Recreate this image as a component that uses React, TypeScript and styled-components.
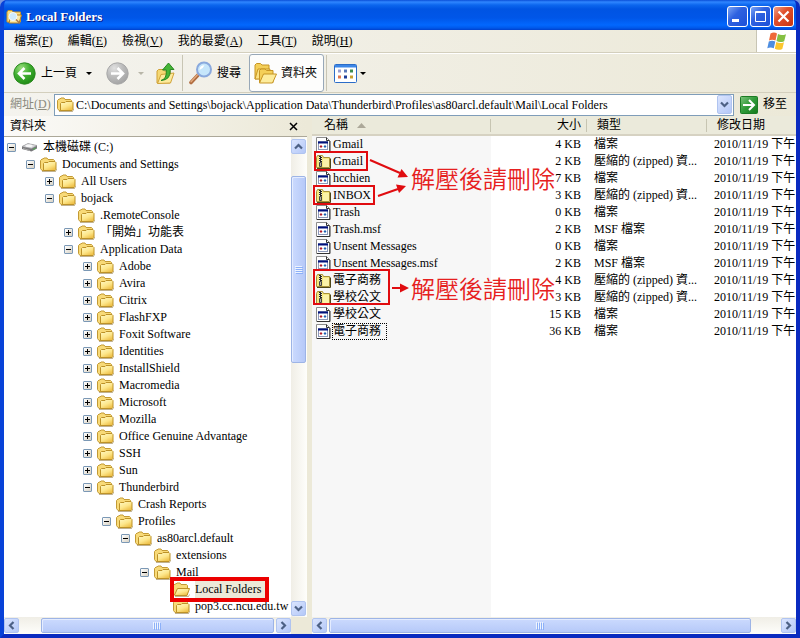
import React from 'react';
import styled, { createGlobalStyle, css } from 'styled-components';

const Global = createGlobalStyle`
  *, *::before, *::after { box-sizing: border-box; }
  body { margin: 0; background: #7a96df; }
  body, button, input, table {
    font-family: 'Liberation Serif', 'Noto Sans CJK TC', serif;
    font-size: 12px;
    line-height: 17px;
    color: #000;
  }
  button { padding: 0; border: 0; background: none; }
  ul { list-style: none; margin: 0; padding: 0; }
  svg { display: block; flex: none; }
`;

const Window = styled.div`
  display: flex;
  flex-direction: column;
  min-height: 100vh;
  overflow: hidden;
  border: 4px solid #0842d8;
  border-top: 0;
  border-color: #0842d8 #0a2bc0 #0a2bc0 #0842d8;
  border-radius: 7px 7px 0 0;
  background: #0a50e0;
`;

const TitleBar = styled.header`
  display: flex;
  align-items: center;
  height: 30px;
  margin: 0 -4px;
  padding: 3px 6px 0 6px;
  gap: 4px;
  background: linear-gradient(#0a4fd8 0, #2f86ff 2px, #0c66ee 5px, #0054e3 9px, #0056e8 18px, #0268fe 25px, #0058ea 28px, #0040cc 30px);
`;

const Title = styled.h1`
  flex: 1;
  margin: 0;
  font-size: 13px;
  line-height: 17px;
  color: #fff;
  text-shadow: 1px 1px 0 #0a1883;
`;

const CaptionButtons = styled.div`
  display: flex;
  gap: 2px;
`;

const CaptionButton = styled.button<{ $close?: boolean }>`
  display: grid;
  place-items: center;
  width: 21px;
  height: 21px;
  border: 1px solid #fff;
  border-radius: 3px;
  background: ${p => p.$close
    ? 'linear-gradient(135deg, #f0a088, #e0502c 40%, #c83410)'
    : 'linear-gradient(135deg, #7ba4f5, #2f62e0 40%, #1c50d8)'};
`;

const MenuRow = styled.nav`
  display: flex;
  height: 23px;
  background: linear-gradient(90deg, #f4f3ee, #ece9d8);
  border-bottom: 1px solid #d3cfbd;
`;

const MenuList = styled.div`
  display: flex;
  flex: 1;
  align-items: center;
  gap: 15px;
  padding-left: 10px;
`;

const MenuButton = styled.button`
  white-space: nowrap;
`;

const LogoBox = styled.div`
  display: grid;
  place-items: center;
  width: 40px;
  border-left: 1px solid #c8c5b4;
  background: #fff;
`;

const Toolbar = styled.div`
  display: flex;
  align-items: center;
  height: 40px;
  padding-left: 9px;
  border-top: 1px solid #fff;
  border-bottom: 1px solid #d3cfbd;
  background: linear-gradient(90deg, #f4f3ee, #ece9d8);
`;

const ToolButton = styled.button<{ $gap?: number; $left?: number; $right?: number; $pressed?: boolean }>`
  display: flex;
  align-items: center;
  gap: ${p => p.$gap ?? 5}px;
  height: 38px;
  margin: 0 ${p => p.$right ?? 0}px 0 ${p => p.$left ?? 0}px;
  white-space: nowrap;
  ${p => p.$pressed && css`
    padding: 0 6px 0 4px;
    border: 1px solid #98a8b8;
    border-radius: 3px;
    background: #fdfdfc;
  `}
`;

const Separator = styled.span`
  width: 1px;
  height: 36px;
  background: #c8c5b4;
`;

const AddressBar = styled.form`
  display: flex;
  align-items: center;
  height: 23px;
  padding: 0 9px 0 6px;
  background: linear-gradient(90deg, #f4f3ee, #ece9d8);
`;

const AddressLabel = styled.label`
  width: 44px;
  color: #8b8a7e;
  white-space: nowrap;
`;

const AddressField = styled.div`
  display: flex;
  flex: 1;
  align-items: center;
  height: 22px;
  padding: 0 1px 0 2px;
  gap: 1px;
  border: 1px solid #7f9db9;
  background: #fff;
`;

const AddressInput = styled.input`
  flex: 1;
  min-width: 0;
  padding: 2px 0 0 1px;
  border: 0;
  outline: 0;
  background: transparent;
`;

const GoButton = styled.button`
  display: flex;
  align-items: center;
  gap: 5px;
  margin-left: 6px;
  white-space: nowrap;
`;

const Panes = styled.main`
  display: flex;
  flex: 1;
  background: #ece9d8;
`;

const FolderPane = styled.aside`
  display: flex;
  flex-direction: column;
  flex: none;
  width: 303px;
  background: #fff;
`;

const PaneHeader = styled.div`
  display: flex;
  align-items: center;
  justify-content: space-between;
  height: 21px;
  padding: 0 9px 0 6px;
  border-bottom: 1px solid #aca899;
  background: linear-gradient(90deg, #fbfaf8, #ece9d8);
`;

const PaneBody = styled.div`
  display: flex;
  flex: 1;
`;

const TreeArea = styled.div`
  flex: 1;
  min-width: 0;
  padding-top: 2px;
  overflow: hidden;
`;

const Branch = styled.ul`
  & & { padding-left: 19px; }
`;

const TreeRow = styled.div`
  position: relative;
  display: flex;
  align-items: center;
  height: 17px;
  padding-left: 3px;
  gap: 5px;
`;

const Expander = styled.button`
  display: grid;
  place-items: center;
  flex: none;
  width: 9px;
  height: 9px;
  border: 1px solid #7b98b5;
  border-radius: 1px;
  background: linear-gradient(135deg, #fff, #d8d2c4);
`;

const ExpanderSpace = styled.span`
  flex: none;
  width: 9px;
`;

const TreeLabel = styled.span<{ $selected?: boolean }>`
  flex: none;
  height: 17px;
  padding-right: 4px;
  white-space: nowrap;
  background: ${p => (p.$selected ? '#ece9d8' : 'transparent')};
`;

const RowMark = styled.span`
  position: absolute;
  z-index: 1;
  left: 14px;
  top: -4px;
  width: 99px;
  height: 25px;
  border: 4px solid #ec0000;
`;

const Scroll = styled.div<{ $vertical?: boolean }>`
  display: flex;
  flex-direction: ${p => (p.$vertical ? 'column' : 'row')};
  flex: none;
  gap: 1px;
  padding: ${p => (p.$vertical ? '2px 0 1px' : '1px 0')};
  ${p => (p.$vertical ? 'width: 16px;' : 'height: 17px;')}
  background: linear-gradient(${p => (p.$vertical ? '90deg' : '180deg')}, #f0eee6, #fefefb);
`;

const ScrollButton = styled.button<{ $tall?: boolean }>`
  display: grid;
  place-items: center;
  flex: none;
  width: 15px;
  height: ${p => (p.$tall ? 19 : 15)}px;
  border: 1px solid #b0c4f0;
  border-radius: 2px;
  background: linear-gradient(135deg, #dbe5fe, #b4c8f8);
`;

const ScrollThumb = styled.div<{ $vertical?: boolean; $before: number; $size: number; $after: number }>`
  display: flex;
  flex: 1;
  flex-direction: ${p => (p.$vertical ? 'column' : 'row')};
  &::before { content: ''; flex: ${p => p.$before}; }
  &::after { content: ''; flex: ${p => p.$after}; }
  & > div {
    display: grid;
    place-items: center;
    flex: ${p => p.$size};
    ${p => (p.$vertical ? 'width: 15px;' : 'height: 15px;')}
    border: 1px solid #9db4e6;
    border-radius: 2px;
    background: linear-gradient(${p => (p.$vertical ? '90deg' : '180deg')}, #cbdafe, #b6c9f8);
    box-shadow: inset 1px 1px 0 #e4ecff;
  }
`;

const BottomRow = styled.div`
  display: flex;
  background: #ece9d8;
`;

const ScrollStretch = styled.div`
  flex: 1;
  min-width: 0;
`;

const Corner = styled.div`
  width: 16px;
`;

const FilePane = styled.section`
  position: relative;
  display: flex;
  flex: 1;
  flex-direction: column;
  min-width: 0;
  margin-left: 5px;
  overflow: hidden;
  background: linear-gradient(#f7f7f7, #f7f7f7) 0 0 / 179px 100% no-repeat #fff;
`;

const FileArea = styled.div`
  flex: 1;
`;

const FileTable = styled.table`
  width: 100%;
  table-layout: fixed;
  border-collapse: separate;
  border-spacing: 0;
`;

const HeadCell = styled.th<{ $width?: number; $right?: boolean; $last?: boolean }>`
  width: ${p => (p.$width ? `${p.$width}px` : 'auto')};
  height: 20px;
  padding: ${p => (p.$right ? '0 6px 0 0' : '0 0 0 10px')};
  font-weight: normal;
  text-align: ${p => (p.$right ? 'right' : 'left')};
  white-space: nowrap;
  border-bottom: 2px solid #d6d2c2;
  background:
    linear-gradient(${p => (p.$last ? '#ebeadb, #ebeadb' : '#c7c5b2, #c7c5b2')}) 100% 3px / 1px 13px no-repeat,
    #ebeadb;
`;

const HeadInner = styled.span`
  display: inline-flex;
  align-items: center;
  gap: 9px;
  height: 17px;
  padding-left: 2px;
  vertical-align: top;
`;

const Cell = styled.td<{ $right?: boolean }>`
  height: 17px;
  padding: ${p => (p.$right ? '0 6px 0 0' : '0 0 0 7px')};
  overflow: hidden;
  text-align: ${p => (p.$right ? 'right' : 'left')};
  white-space: nowrap;
`;

const NameCell = styled(Cell)`
  padding-left: 4px;
`;

const FileName = styled.a<{ $focus?: boolean }>`
  display: inline-flex;
  align-items: center;
  height: 17px;
  vertical-align: top;
  gap: 1px;
  color: #000;
  text-decoration: none;
  & > span {
    padding: 0 5px 0 1px;
    height: 17px;
    line-height: ${p => (p.$focus ? 15 : 17)}px;
    border: ${p => (p.$focus ? '1px dotted #000' : '0')};
    padding-left: ${p => (p.$focus ? 0 : 1)}px;
  }
`;

const Marks = styled.svg`
  position: absolute;
  left: 0;
  top: 0;
  pointer-events: none;
`;

const Note = styled.p<{ $top: number }>`
  position: absolute;
  left: 99px;
  top: ${p => p.$top}px;
  margin: 0;
  font-size: 24px;
  line-height: 32px;
  font-family: 'Noto Sans CJK TC', sans-serif;
  font-weight: 350;
  color: #e62020;
  white-space: nowrap;
`;

const FolderIcon = ({ open }: { open?: boolean }) => (
  <svg width="17" height="15" viewBox="0 0 17 15" aria-hidden="true">
    <defs>
      <linearGradient id="folderFace" x1="0" y1="0" x2="0.6" y2="1">
        <stop offset="0" stopColor="#fffac8" />
        <stop offset="0.6" stopColor="#fde68a" />
        <stop offset="1" stopColor="#efc24c" />
      </linearGradient>
    </defs>
    <path d="M.5 11.500V3.500L2 2h1l1-1h3l1 1.500h5.500l1 1v9l-1 1H2z" fill="#f8da78" stroke="#c39a34" />
    {open
      ? <path d="M1.500 13 4.500 6.500h12L14 13.500H2z" fill="url(#folderFace)" stroke="#bd9228" />
      : <path d="M3.500 13.500V6.500l1-1h3.500l1-1h6l1 1v7l-1 1z" fill="url(#folderFace)" stroke="#bd9228" />}
    <path d="M2 14.500h13.500l1-2" fill="none" stroke="#75540c" strokeOpacity=".45" />
  </svg>
);

const ZipIcon = () => (
  <svg width="15" height="15" viewBox="0 0 15 15" aria-hidden="true">
    <path d="M.5 13V3.500l1-2h5l1 2h6v10H.5z" fill="#f5e87e" stroke="#a89238" />
    <path d="M7 5h6v8H7z" fill="#fbf3a8" />
    <path d="M1 14.500h13.500V4.500" fill="none" stroke="#4c4618" />
    <path d="M3 2h3v10H3z" fill="#f0ecd0" />
    <path d="M3 2.500h2M4 3.500h2M3 4.500h2M4 5.500h2M3 6.500h2M4 7.500h2" stroke="#222" />
    <path d="M3.500 8.500h2v4h-2z" fill="#b8b49c" stroke="#444" />
  </svg>
);

const FileIcon = () => (
  <svg width="15" height="15" viewBox="0 0 15 15" aria-hidden="true">
    <path d="M.5.500h10L13.500 3.500v11H.5z" fill="#fff" stroke="#8c8c8c" />
    <path d="M10.500.500v3h3M14 4v10.500H1" fill="none" stroke="#333" />
    <rect x="2.500" y="4.500" width="9" height="8" fill="#fff" stroke="#8c98b8" />
    <path d="M2 5.500h10" stroke="#00107c" strokeWidth="2" />
    <path d="m3.500 9.500 1.500-1.500 1.500 1.500L5 11z" fill="#b01828" />
    <path d="m7.500 9.500 1.500-1.500 1.500 1.500L9 11z" fill="#1c60b0" />
  </svg>
);

const DriveIcon = () => (
  <svg width="17" height="15" viewBox="0 0 17 15" aria-hidden="true">
    <path d="M1 6.500 7 3.500l9 2v3l-5.500 3L1 9z" fill="#77777a" />
    <path d="M1 6.500 7 3.500l9 2-5.500 3z" fill="#d9d9dc" stroke="#98989c" strokeWidth=".6" />
    <ellipse cx="8" cy="5.800" rx="3.500" ry="1.300" fill="#f8f8f8" />
    <path d="M12 9.500 15 8" stroke="#50b050" />
    <path d="M2 8.500 9 10.500" stroke="#aaa" />
  </svg>
);

const FolderSearchIcon = () => (
  <svg width="16" height="16" viewBox="0 0 16 16" aria-hidden="true">
    <path d="M1 13V3l1-1.500h4L7 3h7.500v10z" fill="#f7dc82" stroke="#c9952b" />
    <path d="M3 14 5 6h10.500L13 14z" fill="#fbe9a4" stroke="#b9811e" />
    <circle cx="7" cy="7.500" r="4" fill="#cdeafd" stroke="#f4f8fb" />
    <path d="m10 10.500 4 4" stroke="#a5774e" strokeWidth="1.500" />
  </svg>
);

const WindowsLogo = () => (
  <svg width="20" height="19" viewBox="0 0 20 19" aria-hidden="true">
    <path d="M3.500 1.500Q7-.5 10 1.500L8.500 8.500Q5 7 2 8.500z" fill="#ee6a3a" />
    <path d="M11 2Q14.500 4 19 2.200L17.200 9.200Q13 11 9.500 9z" fill="#84c043" />
    <path d="M1.800 9.500Q5 8 8.300 9.500L6.800 16.300Q3.500 14.800.3 16.300z" fill="#4d8de0" />
    <path d="M9.300 10Q13 12 17 10.200L15.300 17Q11.500 18.800 7.800 16.800z" fill="#fbc62e" />
  </svg>
);

const RoundArrow = ({ disabled }: { disabled?: boolean }) => (
  <svg width="23" height="23" viewBox="0 0 23 23" aria-hidden="true">
    <defs>
      <radialGradient id={disabled ? 'ballGrey' : 'ballGreen'} cx=".35" cy=".25" r=".8">
        <stop offset="0" stopColor={disabled ? '#e0e0e0' : '#9ade7c'} />
        <stop offset=".5" stopColor={disabled ? '#bcbcbc' : '#3fae30'} />
        <stop offset="1" stopColor={disabled ? '#a2a2a2' : '#1e8a14'} />
      </radialGradient>
    </defs>
    <circle cx="11.500" cy="11.500" r="10.700" fill={`url(#${disabled ? 'ballGrey' : 'ballGreen'})`} stroke={disabled ? '#a8a8a8' : '#2c8a20'} />
    <path
      d={disabled ? 'M5 11.500h12M11.500 6l5.500 5.500-5.500 5.500' : 'M18 11.500H6M11.500 6 6 11.500l5.500 5.500'}
      fill="none" stroke="#fff" strokeWidth="2.600"
    />
  </svg>
);

const Caret = ({ color = '#000' }: { color?: string }) => (
  <svg width="6" height="3" viewBox="0 0 6 3" aria-hidden="true"><path d="M0 0h6L3 3z" fill={color} /></svg>
);

const UpIcon = () => (
  <svg width="19" height="23" viewBox="0 0 19 23" aria-hidden="true">
    <path d="M1 21V9l1.500-1.500H7L8.500 9H14v12z" fill="#f5d873" stroke="#cf9f34" />
    <path d="M1.500 21.500 5 12.500l13-1.500-3.500 10z" fill="#fdeb9c" stroke="#d0a23a" />
    <path d="M5 18.500Q11 17 10.300 8H6.500L12.500 1l5.500 6.500h-3.700Q15 18 5 18.500z" fill="#45b537" stroke="#20801a" strokeWidth=".9" />
  </svg>
);

const SearchIcon = () => (
  <svg width="24" height="24" viewBox="0 0 24 24" aria-hidden="true">
    <path d="m2 21.500 7.500-8" stroke="#b06c40" strokeWidth="3.600" strokeLinecap="round" />
    <path d="m2 20.800 6.500-7" stroke="#e3ab7e" strokeWidth="1.300" strokeLinecap="round" />
    <circle cx="15" cy="8.500" r="7" fill="#c6e6fb" stroke="#8aa9dd" strokeWidth="2" />
    <path d="M10.500 9Q10.500 4.500 15.500 4.300 14 8 10.500 9z" fill="#fff" />
  </svg>
);

const FoldersIcon = () => (
  <svg width="23" height="23" viewBox="0 0 23 23" aria-hidden="true">
    <path d="M1 17V3l1.500-1.500h4L8 3h7v13z" fill="#f4cf58" stroke="#c79524" />
    <path d="M1 17 4 7h12l-2 10z" fill="#fbe284" stroke="#c79524" />
    <path d="M5.500 20.500V8.500L7 7h4l1.500 1.500H19v12z" fill="#f4cf58" stroke="#c79524" />
    <path d="M5.500 21 9.500 12h13l-4 9z" fill="#fdec9c" stroke="#c79524" />
  </svg>
);

const ViewsIcon = () => (
  <svg width="23" height="19" viewBox="0 0 23 19" aria-hidden="true">
    <rect x=".5" y=".5" width="22" height="18" rx="1" fill="#fff" stroke="#2a6cc8" />
    <path d="M1 1h21v2.500H1z" fill="#3c86e6" />
    <path d="M4 5.500h3v3H4z" fill="#9a9fd0" /><path d="M10 5.500h3v3h-3z" fill="#5a78b8" /><path d="M16 5.500h3v3h-3z" fill="#3c8c50" />
    <path d="M4 11.500h3v3H4z" fill="#e07850" /><path d="M10 11.500h3v3h-3z" fill="#1c3c98" /><path d="M16 11.500h3v3h-3z" fill="#c8a030" />
  </svg>
);

const GoIcon = () => (
  <svg width="18" height="18" viewBox="0 0 18 18" aria-hidden="true">
    <defs>
      <linearGradient id="goFace" x1="0" y1="0" x2="1" y2="1">
        <stop offset="0" stopColor="#7cc47c" /><stop offset=".5" stopColor="#2f9a38" /><stop offset="1" stopColor="#157a1c" />
      </linearGradient>
    </defs>
    <rect x=".5" y=".5" width="17" height="17" rx="1" fill="url(#goFace)" stroke="#1c7c24" />
    <path d="M3 9h11M9 4l5 5-5 5" fill="none" stroke="#fff" strokeWidth="2" />
  </svg>
);

const chevrons = {
  up: 'M1 6.500 4.500 3 8 6.500',
  down: 'M1 2.500 4.500 6 8 2.500',
  left: 'M6.500 1 3 4.500 6.500 8',
  right: 'M2.500 1 6 4.500 2.500 8',
};
type Direction = keyof typeof chevrons;

const Chevron = ({ to }: { to: Direction }) => (
  <svg width="9" height="9" viewBox="0 0 9 9" aria-hidden="true">
    <path d={chevrons[to]} fill="none" stroke="#4d6185" strokeWidth="2.200" />
  </svg>
);

const Grip = ({ vertical }: { vertical?: boolean }) => (
  <svg width="8" height="8" viewBox="0 0 8 8" aria-hidden="true">
    <path d={vertical ? 'M0 .5h7M0 2.500h7M0 4.500h7M0 6.500h7' : 'M.5 0v7M2.500 0v7M4.500 0v7M6.500 0v7'} stroke="#eef4fe" />
    <path d={vertical ? 'M1 1.500h7M1 3.500h7M1 5.500h7M1 7.500h7' : 'M1.500 1v7M3.500 1v7M5.500 1v7M7.500 1v7'} stroke="#8cb0f8" />
  </svg>
);

interface ScrollBarProps { vertical?: boolean; before: number; size: number; after: number }

const ScrollBar = ({ vertical, before, size, after }: ScrollBarProps) => (
  <Scroll $vertical={vertical}>
    <ScrollButton type="button" aria-label={vertical ? 'Scroll up' : 'Scroll left'}><Chevron to={vertical ? 'up' : 'left'} /></ScrollButton>
    <ScrollThumb $vertical={vertical} $before={before} $size={size} $after={after}>
      <div><Grip vertical={vertical} /></div>
    </ScrollThumb>
    <ScrollButton type="button" aria-label={vertical ? 'Scroll down' : 'Scroll right'}><Chevron to={vertical ? 'down' : 'right'} /></ScrollButton>
  </Scroll>
);

interface Node { name: string; state?: 'open' | 'closed'; drive?: boolean; selected?: boolean; children?: Node[] }

const closed = (name: string): Node => ({ name, state: 'closed' });

const tree: Node[] = [{
  name: '本機磁碟 (C:)', state: 'open', drive: true, children: [{
    name: 'Documents and Settings', state: 'open', children: [
      closed('All Users'),
      {
        name: 'bojack', state: 'open', children: [
          { name: '.RemoteConsole' },
          closed('「開始」功能表'),
          {
            name: 'Application Data', state: 'open', children: [
              ...['Adobe', 'Avira', 'Citrix', 'FlashFXP', 'Foxit Software', 'Identities', 'InstallShield',
                'Macromedia', 'Microsoft', 'Mozilla', 'Office Genuine Advantage', 'SSH', 'Sun'].map(closed),
              {
                name: 'Thunderbird', state: 'open', children: [
                  { name: 'Crash Reports' },
                  {
                    name: 'Profiles', state: 'open', children: [{
                      name: 'as80arcl.default', state: 'open', children: [
                        { name: 'extensions' },
                        {
                          name: 'Mail', state: 'open', children: [
                            { name: 'Local Folders', selected: true },
                            { name: 'pop3.cc.ncu.edu.tw' },
                          ],
                        },
                      ],
                    }],
                  },
                ],
              },
            ],
          },
        ],
      },
    ],
  }],
}];

const TreeNodes = ({ nodes }: { nodes: Node[] }) => (
  <Branch>
    {nodes.map(node => (
      <li key={node.name}>
        <TreeRow>
          {node.state ? (
            <Expander type="button" aria-label={node.name} aria-expanded={node.state === 'open'}>
              <svg width="5" height="5" viewBox="0 0 5 5" aria-hidden="true">
                <path d={node.state === 'open' ? 'M0 2.500h5' : 'M0 2.500h5M2.500 0v5'} stroke="#000" />
              </svg>
            </Expander>
          ) : <ExpanderSpace />}
          {node.drive ? <DriveIcon /> : <FolderIcon open={node.selected} />}
          <TreeLabel $selected={node.selected}>{node.name}</TreeLabel>
          {node.selected && <RowMark />}
        </TreeRow>
        {node.children && <TreeNodes nodes={node.children} />}
      </li>
    ))}
  </Branch>
);

type Kind = 'file' | 'zip' | 'msf';
const kindText: Record<Kind, string> = { file: '檔案', zip: '壓縮的 (zipped) 資...', msf: 'MSF 檔案' };

const files: [string, number, Kind][] = [
  ['Gmail', 4, 'file'],
  ['Gmail', 2, 'zip'],
  ['hcchien', 7, 'file'],
  ['INBOX', 3, 'zip'],
  ['Trash', 0, 'file'],
  ['Trash.msf', 2, 'msf'],
  ['Unsent Messages', 0, 'file'],
  ['Unsent Messages.msf', 2, 'msf'],
  ['電子商務', 4, 'zip'],
  ['學校公文', 3, 'zip'],
  ['學校公文', 15, 'file'],
  ['電子商務', 36, 'file'],
];

const menus: [string, string][] = [
  ['檔案', 'F'], ['編輯', 'E'], ['檢視', 'V'], ['我的最愛', 'A'], ['工具', 'T'], ['說明', 'H'],
];

export default function App() {
  return (
    <>
      <Global />
      <Window>
        <TitleBar>
          <FolderSearchIcon />
          <Title>Local Folders</Title>
          <CaptionButtons>
            <CaptionButton type="button" aria-label="Minimize">
              <svg width="13" height="13" viewBox="0 0 13 13"><path d="M1 10.500h7" stroke="#fff" strokeWidth="3" /></svg>
            </CaptionButton>
            <CaptionButton type="button" aria-label="Maximize">
              <svg width="13" height="13" viewBox="0 0 13 13"><path d="M1.500 1.500h10v10h-10zM1 2.500h11" fill="none" stroke="#fff" /></svg>
            </CaptionButton>
            <CaptionButton type="button" aria-label="Close" $close>
              <svg width="13" height="13" viewBox="0 0 13 13"><path d="m1.500 1.500 10 10m0-10-10 10" stroke="#fff" strokeWidth="2.200" /></svg>
            </CaptionButton>
          </CaptionButtons>
        </TitleBar>

        <MenuRow>
          <MenuList>
            {menus.map(([label, key]) => (
              <MenuButton type="button" key={key}>{label}(<u>{key}</u>)</MenuButton>
            ))}
          </MenuList>
          <LogoBox><WindowsLogo /></LogoBox>
        </MenuRow>

        <Toolbar>
          <ToolButton type="button"><RoundArrow />上一頁</ToolButton>
          <ToolButton type="button" aria-label="Back history" $left={9} $right={14}><Caret /></ToolButton>
          <ToolButton type="button" aria-label="Forward" $gap={9} $right={12} disabled>
            <RoundArrow disabled /><Caret color="#b8b6a8" />
          </ToolButton>
          <ToolButton type="button" aria-label="Up" $right={7}><UpIcon /></ToolButton>
          <Separator />
          <ToolButton type="button" $gap={4} $left={6} $right={8}><SearchIcon />搜尋</ToolButton>
          <ToolButton type="button" $gap={4} $right={2} $pressed aria-pressed="true"><FoldersIcon />資料夾</ToolButton>
          <Separator />
          <ToolButton type="button" aria-label="Views" $gap={3} $left={7}><ViewsIcon /><Caret /></ToolButton>
        </Toolbar>

        <AddressBar>
          <AddressLabel htmlFor="address">網址(<u>D</u>)</AddressLabel>
          <AddressField>
            <FolderIcon />
            <AddressInput
              id="address"
              defaultValue={'C:\\Documents and Settings\\bojack\\Application Data\\Thunderbird\\Profiles\\as80arcl.default\\Mail\\Local Folders'}
            />
            <ScrollButton type="button" aria-label="Address history" $tall><Chevron to="down" /></ScrollButton>
          </AddressField>
          <GoButton type="button"><GoIcon />移至</GoButton>
        </AddressBar>

        <Panes>
          <FolderPane>
            <PaneHeader>
              資料夾
              <button type="button" aria-label="Close folders">
                <svg width="9" height="9" viewBox="0 0 9 9"><path d="m1 1 7 7m0-7-7 7" stroke="#000" strokeWidth="1.500" /></svg>
              </button>
            </PaneHeader>
            <PaneBody>
              <TreeArea><TreeNodes nodes={tree} /></TreeArea>
              <ScrollBar vertical before={21} size={185} after={237} />
            </PaneBody>
            <BottomRow>
              <ScrollStretch><ScrollBar before={21} size={232} after={1} /></ScrollStretch>
              <Corner />
            </BottomRow>
          </FolderPane>

          <FilePane>
            <FileArea>
              <FileTable>
                <thead>
                  <tr>
                    <HeadCell $width={179}>
                      <HeadInner>
                        名稱
                        <svg width="9" height="5" viewBox="0 0 9 5" aria-hidden="true"><path d="M0 5h9L4.500 0z" fill="#aca899" /></svg>
                      </HeadInner>
                    </HeadCell>
                    <HeadCell $width={96} $right>大小</HeadCell>
                    <HeadCell $width={120}>類型</HeadCell>
                    <HeadCell $last>修改日期</HeadCell>
                  </tr>
                </thead>
                <tbody>
                  {files.map(([name, size, kind], i) => (
                    <tr key={i}>
                      <NameCell>
                        <FileName href="#" $focus={i === files.length - 1}>
                          {kind === 'zip' ? <ZipIcon /> : <FileIcon />}
                          <span>{name}</span>
                        </FileName>
                      </NameCell>
                      <Cell $right>{size} KB</Cell>
                      <Cell>{kindText[kind]}</Cell>
                      <Cell>2010/11/19 下午</Cell>
                    </tr>
                  ))}
                </tbody>
              </FileTable>
            </FileArea>
            <ScrollBar before={1} size={421} after={29} />

            <Marks width="110" height="200" viewBox="0 0 110 200" aria-hidden="true">
              <g fill="none" stroke="#e00c10" strokeWidth="2">
                <path d="M3 36h52v18H3zM2 70h60v18H2zM2 154h75v34H2z" />
                <path d="m58 44 30 13M66 80l20-7M80 172h10" />
              </g>
              <path d="m96 61-10.500.500 4-8.500zM94 70l-10-1.500 3 8.500zM97 172l-9-4.500v9z" fill="#e00c10" />
            </Marks>
            <Note $top={46}>解壓後請刪除</Note>
            <Note $top={156}>解壓後請刪除</Note>
          </FilePane>
        </Panes>
      </Window>
    </>
  );
}
